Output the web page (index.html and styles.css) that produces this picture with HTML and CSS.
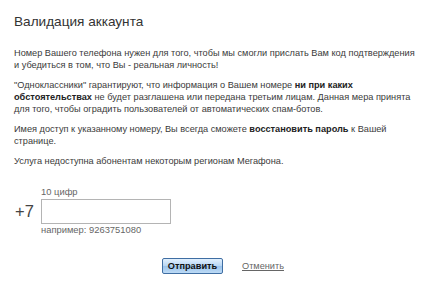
FILE: index.html
```html
<!DOCTYPE html>
<html>
<head>
<meta charset="utf-8">
<link rel="stylesheet" href="styles.css">
</head>
<body>
<div class="page">
  <h1 class="title">Валидация аккаунта</h1>
  <p class="para">Номер Вашего телефона нужен для того, чтобы мы смогли прислать Вам код подтверждения и убедиться в том, что Вы - реальная личность!</p>
  <p class="para">"Одноклассники" гарантируют, что информация о Вашем номере <b>ни при каких обстоятельствах</b> не будет разглашена или передана третьим лицам. Данная мера принята для того, чтобы оградить пользователей от автоматических спам-ботов.</p>
  <p class="para">Имея доступ к указанному номеру, Вы всегда сможете <b>восстановить пароль</b> к Вашей странице.</p>
  <p class="para">Услуга недоступна абонентам некоторым регионам Мегафона.</p>
  <div class="phone">
    <span class="prefix">+7</span>
    <div class="field">
      <span class="hint">10 цифр</span>
      <input class="input" type="text">
      <span class="hint">например: 9263751080</span>
    </div>
  </div>
  <div class="actions">
    <button class="submit">Отправить</button>
    <a class="cancel" href="#">Отменить</a>
  </div>
</div>
</body>
</html>
```
FILE: styles.css
```css
html, body { margin: 0; padding: 0; background: #fff; }
.page {
  padding: 14px 14px 0 14px;
  font-family: "Liberation Sans", Arial, sans-serif;
  font-size: 9.2px;
  line-height: 12px;
  color: #3a3a3a;
}
.title {
  margin: 0 0 17px 0;
  font-size: 13.6px;
  line-height: 16px;
  font-weight: normal;
  color: #333;
}
.para { margin: 0 0 8px 0; }
.para b { color: #222; }
.phone {
  display: flex;
  align-items: center;
  margin-top: 19px;
}
.prefix {
  font-size: 16.5px;
  line-height: 20px;
  color: #444;
  width: 27px;
  padding-left: 1px;
  box-sizing: border-box;
}
.field { display: flex; flex-direction: column; align-items: flex-start; }
.hint { font-size: 9.4px; line-height: 11px; color: #666; }
.input {
  box-sizing: border-box;
  width: 130px;
  height: 25px;
  margin: 2px 0 0 0;
  border: 1px solid #b4b4b4;
  padding: 1px;
  background: #fff;
}
.actions {
  display: flex;
  align-items: center;
  gap: 19px;
  margin: 23px 0 0 148px;
}
.submit {
  box-sizing: border-box;
  font-family: "Liberation Sans", Arial, sans-serif;
  font-size: 9.2px;
  font-weight: bold;
  color: #111;
  height: 16px;
  width: 61px;
  padding: 0;
  border: 1px solid #3f6ea3;
  border-radius: 2px;
  background: linear-gradient(#e2f0fd, #b7d6f4 50%, #9cc4ec 52%, #bcdaf5);
}
.cancel {
  color: #666;
  text-decoration: underline;
  font-size: 9.2px;
}
```
